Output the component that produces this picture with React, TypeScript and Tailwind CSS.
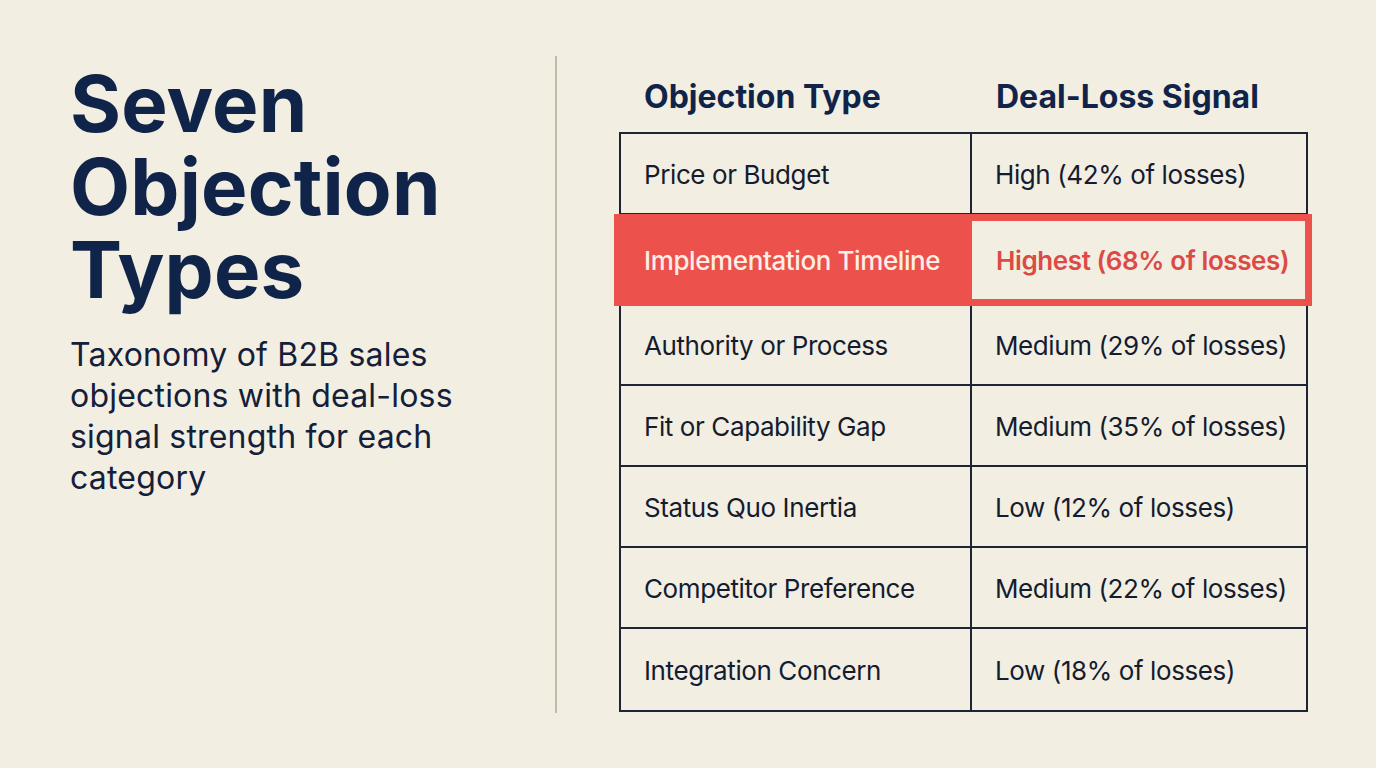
import React from 'react';

type Row = {
  type: string;
  signal: string;
  highlight?: boolean;
};

const rows: Row[] = [
  { type: 'Price or Budget', signal: 'High (42% of losses)' },
  { type: 'Implementation Timeline', signal: 'Highest (68% of losses)', highlight: true },
  { type: 'Authority or Process', signal: 'Medium (29% of losses)' },
  { type: 'Fit or Capability Gap', signal: 'Medium (35% of losses)' },
  { type: 'Status Quo Inertia', signal: 'Low (12% of losses)' },
  { type: 'Competitor Preference', signal: 'Medium (22% of losses)' },
  { type: 'Integration Concern', signal: 'Low (18% of losses)' },
];

const font = { fontFamily: 'Inter, "Liberation Sans", sans-serif' };

const App = () => {
  return (
    <div className="w-[1376px] h-[768px] bg-[#f3eee2] flex overflow-hidden" style={font}>
      {/* Title column */}
      <div className="w-[555px] pl-[70px] pt-[62px]">
        <h1 className="text-[78px] leading-[83px] font-bold text-[#10244a] tracking-[0.2px]">
          Seven
          <br />
          Objection
          <br />
          Types
        </h1>
        <p className="mt-[23px] w-[430px] text-[32px] leading-[41px] text-[#14203a] tracking-[0.2px]">
          Taxonomy of B2B sales objections with deal-loss signal strength for each category
        </p>
      </div>

      {/* Divider */}
      <div className="w-[2px] h-[657px] mt-[56px] bg-[#c2baa9]" />

      {/* Table */}
      <div className="ml-[62px] pt-[77px] w-[689px]">
        <div className="flex h-[40px] leading-[40px] text-[32px] font-bold text-[#10244a] mb-[15px]">
          <div className="w-[353px] pl-[25px]">Objection Type</div>
          <div className="pl-[24px]">Deal-Loss Signal</div>
        </div>

        <div className="border-2 border-[#1c2435]">
          {rows.map((row, idx) => {
            const last = idx === rows.length - 1;
            if (row.highlight) {
              return (
                <div
                  key={row.type}
                  className="relative z-10 flex h-[92px] -my-px -ml-[7px] -mr-[6px] bg-[#ec514b] text-[26px] tracking-[-0.4px]"
                >
                  <div className="w-[358px] pl-[30px] flex items-center text-[#fdeee6] font-medium">
                    {row.type}
                  </div>
                  <div className="flex-1 my-[7px] mr-[7px] bg-[#f3eee2] pl-[24px] flex items-center text-[#dc4a45] font-semibold">
                    {row.signal}
                  </div>
                </div>
              );
            }
            return (
              <div
                key={row.type}
                className={`flex h-[81px] text-[26px] tracking-[-0.4px] text-[#141c30] ${last ? '' : 'border-b-2 border-[#1c2435]'}`}
              >
                <div className="w-[351px] pl-[23px] pt-px flex items-center border-r-2 border-[#1c2435]">
                  {row.type}
                </div>
                <div className="flex-1 pl-[23px] pt-px flex items-center">{row.signal}</div>
              </div>
            );
          })}
        </div>
      </div>
    </div>
  );
};

export default App;
